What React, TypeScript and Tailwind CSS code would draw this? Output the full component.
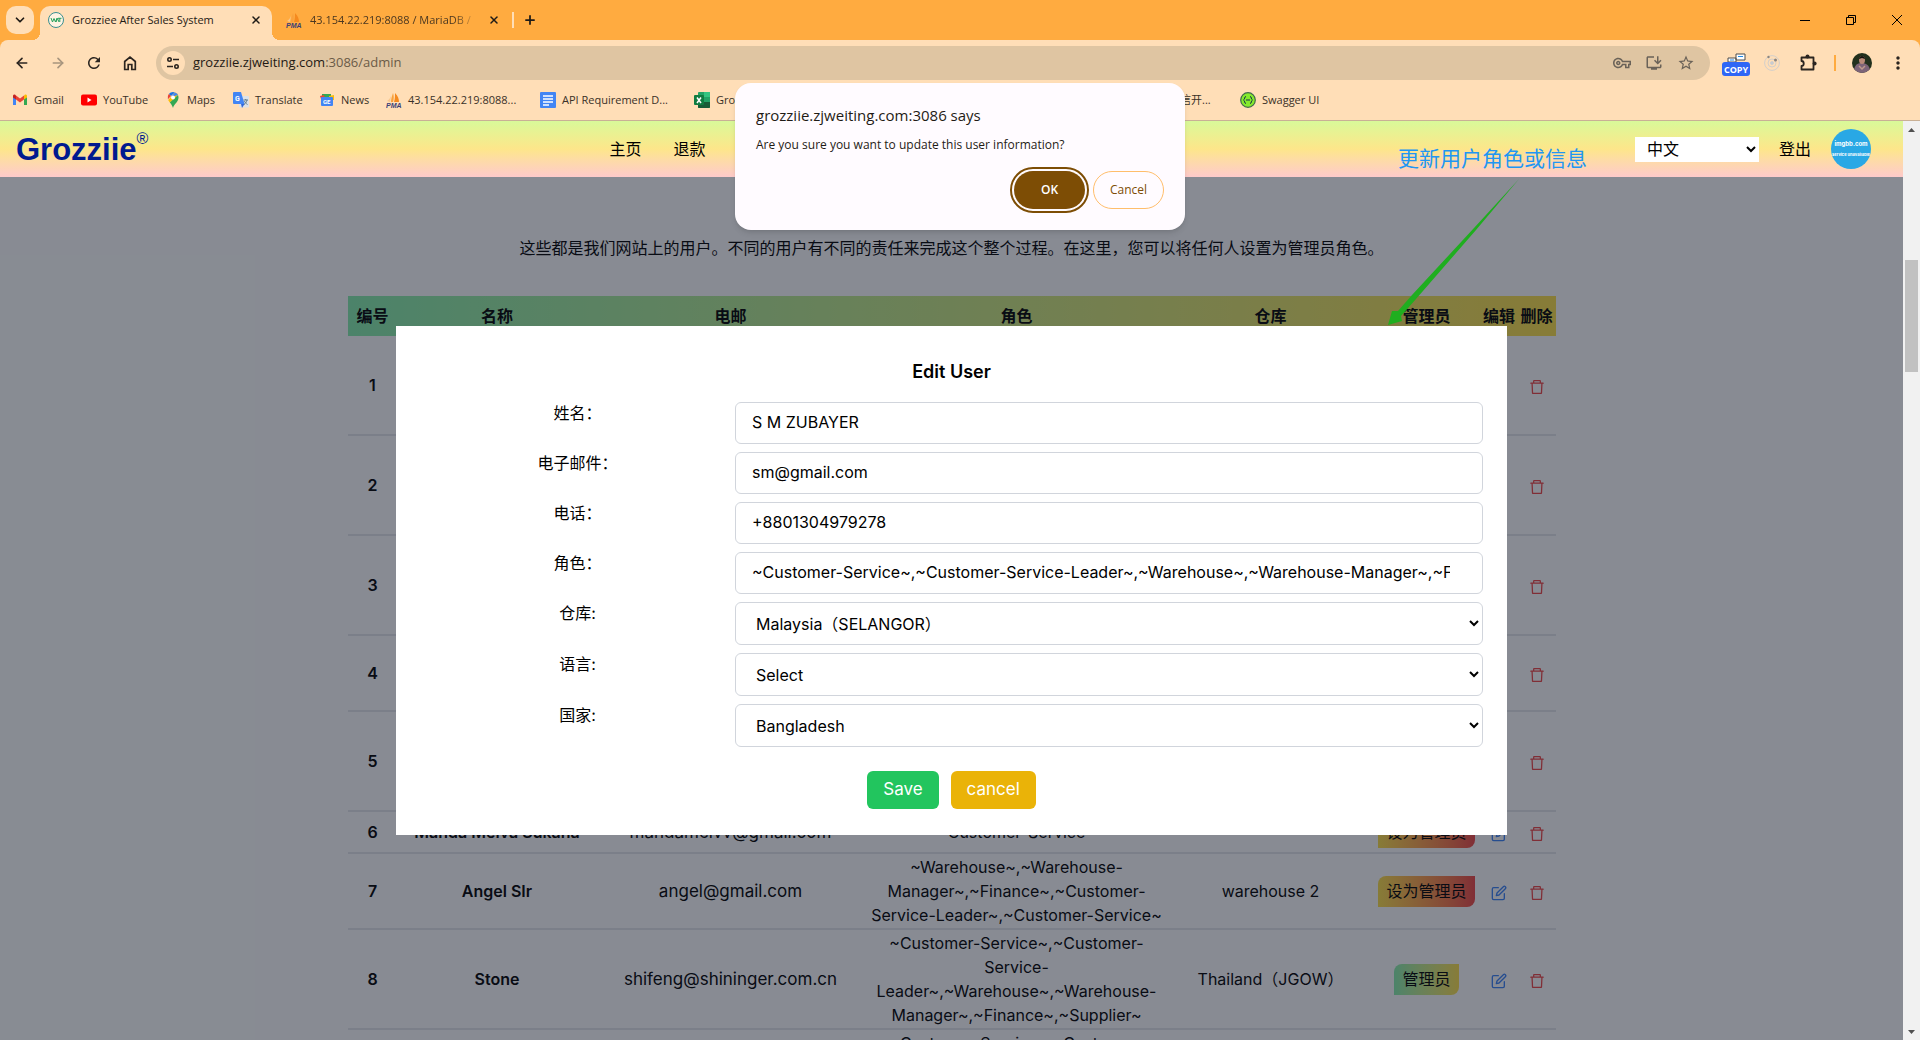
import React from "react";
import { MdOutlineVpnKey, MdInstallDesktop, MdStarBorder, MdMoreVert, MdRefresh } from "react-icons/md";
import { AiOutlineDelete } from "react-icons/ai";
import { FiEdit } from "react-icons/fi";
import { ArrowLeft, ArrowRight, ChevronDown, Plus, X } from "lucide-react";

type User = {
  id: number;
  name: string;
  email: string;
  roles: string;
  warehouse: string;
  isAdmin: boolean;
  height: string;
};

const FULL = "~Customer-Service~,~Customer-Service-Leader~,~Warehouse~,~Warehouse-Manager~,~Finance~,~Supplier~";

const users: User[] = [
  { id: 1, name: "", email: "", roles: "", warehouse: "", isAdmin: true, height: "h-[99px]" },
  { id: 2, name: "", email: "", roles: "", warehouse: "", isAdmin: true, height: "h-[100px]" },
  { id: 3, name: "", email: "", roles: "", warehouse: "", isAdmin: true, height: "h-[100px]" },
  { id: 4, name: "", email: "", roles: "", warehouse: "", isAdmin: true, height: "h-[76px]" },
  { id: 5, name: "", email: "", roles: "", warehouse: "", isAdmin: true, height: "h-[100px]" },
  { id: 6, name: "Manda Melva Sukana", email: "mandamelvv@gmail.com", roles: "Customer-Service", warehouse: "", isAdmin: false, height: "h-[42px]" },
  { id: 7, name: "Angel SIr", email: "angel@gmail.com", roles: "~Warehouse~,~Warehouse-Manager~,~Finance~,~Customer-Service-Leader~,~Customer-Service~", warehouse: "warehouse 2", isAdmin: false, height: "h-[76px]" },
  { id: 8, name: "Stone", email: "shifeng@shininger.com.cn", roles: FULL, warehouse: "Thailand（JGOW）", isAdmin: true, height: "h-[100px]" },
  { id: 9, name: "", email: "", roles: FULL, warehouse: "", isAdmin: true, height: "h-[100px]" },
];

function PmaIcon() {
  return (
    <svg viewBox="0 0 16 16" className="size-4 shrink-0">
      <path d="M5 10 C5 7 6 4 7 1 C8 4 8 7 7 10Z" fill="#f8a13c" />
      <path d="M8 10 C9 7 9 4 9 1 C12 4 13 7 13 10Z" fill="#f58a1f" />
      <path d="M1 9 C3 8 4 6 5 4 L4 10Z" fill="#f9c68a" />
      <text x="0" y="16" fontSize="7" fontWeight="bold" fontStyle="italic" fontFamily="Liberation Sans" fill="#3b3f77">PMA</text>
    </svg>
  );
}

function GmailIcon() {
  return (
    <svg viewBox="0 0 16 16" className="size-4 shrink-0">
      <path d="M1 4v9h3V7z" fill="#4285f4" />
      <path d="M15 4v9h-3V7z" fill="#34a853" />
      <path d="M4 3.500v4L8 10.500l4-3v-4L8 6.500z" fill="#ea4335" />
      <path d="M1 4c0-1.500 2-2 3-.5v4L1 5.500z" fill="#c5221f" />
      <path d="M15 4c0-1.500-2-2-3-.5v4l3-2z" fill="#fbbc04" />
    </svg>
  );
}

function YouTubeIcon() {
  return (
    <svg viewBox="0 0 16 16" className="size-4 shrink-0">
      <rect x="0" y="2.500" width="16" height="11" rx="2" fill="#f00" />
      <path d="M6.500 5.500v5l4-2.500z" fill="#fff" />
    </svg>
  );
}

function MapsIcon() {
  return (
    <svg viewBox="0 0 16 16" className="size-4 shrink-0">
      <path d="M8 0a5.500 5.500 0 0 0-4.200 2L6 4l4-3.600A5.500 5.500 0 0 0 8 0z" fill="#1a73e8" />
      <path d="M3.800 2a5.500 5.500 0 0 0-.9 5.200L6 4z" fill="#ea4335" />
      <path d="M10 .4 3.200 8c.4 1 1 1.800 1.600 2.600L13 3A5.500 5.500 0 0 0 10 .4z" fill="#fbbc04" />
      <path d="M13 3 4.800 10.600C6.500 12.500 7.300 14 8 16c1-4 5.500-6 5.500-10.500 0-1-.2-1.800-.5-2.500z" fill="#34a853" />
      <path d="M13 3a5.500 5.500 0 0 0-3-2.600L6 5z" fill="#4285f4" />
      <circle cx="8" cy="5.500" r="2" fill="#fff" />
    </svg>
  );
}

function TranslateIcon() {
  return (
    <svg viewBox="0 0 16 16" className="size-4 shrink-0">
      <rect x="6" y="4" width="10" height="11.500" rx="1" fill="#dde2e8" />
      <path d="M0 1a1 1 0 0 1 1-1h7l3.500 12H1a1 1 0 0 1-1-1z" fill="#4285f4" />
      <path d="M8 12h3.500L9 16z" fill="#3367d6" />
      <text x="2" y="8.500" fontSize="7" fontWeight="bold" fontFamily="Roboto" fill="#fff">G</text>
      <path d="M10.500 8h4.500M12.700 7v1M14 8c-.4 2-1.500 3.500-3 4.500M11.500 9c.5 1.500 1.500 2.500 3 3.500" stroke="#607d8b" fill="none" />
    </svg>
  );
}

function NewsIcon() {
  return (
    <svg viewBox="0 0 16 16" className="size-4 shrink-0">
      <rect x="3" y="2" width="9" height="5" fill="#34a853" />
      <path d="M1 4l4-1 1 4H2z" fill="#ea4335" />
      <path d="M10 4l5-1v5h-5z" fill="#fbbc04" />
      <rect x="2" y="5" width="12" height="9" rx="1" fill="#4285f4" />
      <text x="4" y="12" fontSize="6" fontWeight="bold" fontFamily="Roboto" fill="#fff">GE</text>
    </svg>
  );
}

function DocsIcon() {
  return (
    <svg viewBox="0 0 16 16" className="size-4 shrink-0">
      <rect width="16" height="16" rx="1" fill="#4285f4" />
      <path d="M3 4h10M3 7h10M3 10h10M3 13h6" stroke="#fff" strokeWidth="1.500" />
    </svg>
  );
}

function ExcelIcon() {
  return (
    <svg viewBox="0 0 16 16" className="size-4 shrink-0">
      <rect x="4" width="12" height="16" rx="1" fill="#21a366" />
      <path d="M10 0h5a1 1 0 0 1 1 1v4h-6z" fill="#33c481" />
      <path d="M4 10h12v5a1 1 0 0 1-1 1H5a1 1 0 0 1-1-1z" fill="#185c37" />
      <rect y="3" width="10" height="10" rx="1" fill="#107c41" />
      <path d="M3 5.500l4 5.500M7 5.500L3 11" stroke="#fff" strokeWidth="1.500" />
    </svg>
  );
}

function SwaggerIcon() {
  return (
    <svg viewBox="0 0 16 16" className="size-4 shrink-0">
      <circle cx="8" cy="8" r="7.300" fill="#85ea2d" stroke="#3f6b4a" strokeWidth="1.200" />
      <path d="M6 4.500c-2 0-.8 3-2.500 3.500C5.200 8.500 4 11.500 6 11.500M10 4.500c2 0 .8 3 2.500 3.500-1.700.5-.5 3.500-2.500 3.500M6 8h4" stroke="#173647" fill="none" />
    </svg>
  );
}

function SiteIcon() {
  return (
    <svg viewBox="0 0 16 16" className="size-4 shrink-0">
      <circle cx="8" cy="8" r="7.500" fill="#fff3e3" stroke="#3a8f8f" />
      <path d="M3 6l1.500 4L6 6.500 7.500 10 9 6M8 10l1.500-3.500L11 10M10 6.300h3.500M11.800 6.300V10" stroke="#22a05a" fill="none" />
    </svg>
  );
}

const bookmarks = [
  { label: "Gmail", icon: <GmailIcon />, width: "w-[69px]" },
  { label: "YouTube", icon: <YouTubeIcon />, width: "w-[84px]" },
  { label: "Maps", icon: <MapsIcon />, width: "w-[68px]" },
  { label: "Translate", icon: <TranslateIcon />, width: "w-[86px]" },
  { label: "News", icon: <NewsIcon />, width: "w-[67px]" },
  { label: "43.154.22.219:8088...", icon: <PmaIcon />, width: "w-[154px]" },
  { label: "API Requirement D...", icon: <DocsIcon />, width: "w-[154px]" },
  { label: "Grozziie", icon: <ExcelIcon />, width: "w-[486px]" },
  { label: "信开...", icon: null, width: "w-[60px]" },
  { label: "Swagger UI", icon: <SwaggerIcon />, width: "w-[100px]" },
];

function TabStrip() {
  return (
    <div className="flex h-10 items-end bg-[#ffab40]">
      <button aria-label="Search tabs" className="mb-1.5 ml-1.5 flex size-7 items-center justify-center rounded-[10px] bg-[#ffdeb7]">
        <ChevronDown className="size-3.5" strokeWidth={3} />
      </button>
      <div className="relative ml-1.5 flex h-[34px] w-[232px] items-center rounded-t-[10px] bg-[#ffdeb7] pb-1.5 pl-2 pr-2">
        <span className="absolute -left-2 bottom-0 size-2 bg-[radial-gradient(circle_at_0_0,#ffab40_8px,#ffdeb7_8px)]" />
        <span className="absolute -right-2 bottom-0 size-2 bg-[radial-gradient(circle_at_100%_0,#ffab40_8px,#ffdeb7_8px)]" />
        <SiteIcon />
        <span className="ml-2 grow whitespace-nowrap">Grozziee After Sales System</span>
        <button aria-label="Close tab" className="flex size-4 items-center justify-center">
          <X className="size-3" strokeWidth={3} />
        </button>
      </div>
      <div className="flex h-[34px] w-[240px] items-center pb-1.5 pl-3.5">
        <PmaIcon />
        <span className="ml-2 w-[168px] overflow-hidden whitespace-nowrap text-[#4a3720] [mask-image:linear-gradient(to_right,black_85%,transparent)]">
          43.154.22.219:8088 / MariaDB /
        </span>
        <button aria-label="Close tab" className="ml-2 flex size-4 items-center justify-center">
          <X className="size-3" strokeWidth={3} />
        </button>
      </div>
      <span className="mb-3 h-4 w-0.5 bg-[#ffdeb7]" />
      <button aria-label="New tab" className="mb-1.5 ml-0.5 flex size-7 items-center justify-center">
        <Plus className="size-3.5" strokeWidth={3} />
      </button>
      <div className="ml-auto flex h-10">
        <button aria-label="Minimize" className="flex w-[46px] items-center justify-center">
          <svg viewBox="0 0 10 10" className="size-2.5"><path d="M0 5.500h10" stroke="#000" /></svg>
        </button>
        <button aria-label="Restore" className="flex w-[46px] items-center justify-center">
          <svg viewBox="0 0 10 10" className="size-2.5"><path d="M.5 2.500h7v7h-7zM2.500 2.500v-2h7v7h-2" fill="none" stroke="#000" /></svg>
        </button>
        <button aria-label="Close window" className="flex w-[46px] items-center justify-center">
          <svg viewBox="0 0 10 10" className="size-2.5"><path d="M0 0l10 10M10 0L0 10" stroke="#000" /></svg>
        </button>
      </div>
    </div>
  );
}

function Toolbar() {
  return (
    <div className="flex h-[46px] items-center rounded-t-lg bg-[#ffdeb7] px-1 text-[#2b2520]">
      <button aria-label="Back" className="flex w-9 justify-center"><ArrowLeft className="size-4" strokeWidth={2.5} /></button>
      <button aria-label="Forward" className="flex w-9 justify-center text-[#a8957e]"><ArrowRight className="size-4" strokeWidth={2.5} /></button>
      <button aria-label="Reload" className="flex w-9 justify-center"><MdRefresh className="size-[18px]" /></button>
      <button aria-label="Home" className="flex w-9 justify-center">
        <svg viewBox="0 0 16 16" className="size-4"><path d="M2.700 14.500V6.500L8 2.200l5.300 4.300v8H9.800V9.500H6.200v5z" fill="none" stroke="currentColor" strokeWidth="1.700" /></svg>
      </button>
      <div className="mx-2 flex h-[34px] grow items-center rounded-full bg-[#dfc5a2] pl-[5px] pr-[15px]">
        <button aria-label="View site information" className="flex size-6 items-center justify-center rounded-full bg-[#ffdeb7]">
          <svg viewBox="0 0 14 14" className="size-3.5" fill="none" stroke="currentColor" strokeWidth="1.600">
            <circle cx="3.500" cy="3.500" r="1.700" /><path d="M7 3.500h6M1 10.500h6" /><circle cx="10.500" cy="10.500" r="1.700" />
          </svg>
        </button>
        <span className="ml-2 text-[13px] text-[#1f1a14]">grozziie.zjweiting.com<span className="text-[#6b5b47]">:3086/admin</span></span>
        <span className="ml-auto flex gap-3.5 text-[#6a6258]">
          <MdOutlineVpnKey className="size-[18px]" />
          <MdInstallDesktop className="size-[18px]" />
          <MdStarBorder className="size-[18px]" />
        </span>
      </div>
      <span className="flex w-9 justify-center pt-1">
        <svg viewBox="0 0 28 24" className="h-6 w-7">
          <path d="M14 1h9v6h-9zM6 5h8v4H6z" fill="#fff" stroke="#4d4d4d" />
          <path d="M16 3.500h5M8 7h4" stroke="#1e88e5" />
          <rect y="9" width="28" height="14" rx="3" fill="#2f66f6" />
          <text x="14" y="20" textAnchor="middle" fontSize="9" fontWeight="bold" fontFamily="Open Sans" fill="#fff">COPY</text>
        </svg>
      </span>
      <span className="flex w-9 justify-center">
        <svg viewBox="0 0 16 16" className="size-4" fill="none" stroke="#d3cfcb">
          <circle cx="8" cy="8" r="7.400" /><circle cx="8" cy="8" r="4" /><circle cx="8" cy="8" r="1.500" fill="#c4cbd4" />
          <circle cx="4.500" cy="2" r="1.200" fill="#8b8580" stroke="none" /><circle cx="11.500" cy="5" r="1.500" fill="#8b8580" stroke="none" />
        </svg>
      </span>
      <span className="flex w-9 justify-center">
        <svg viewBox="0 0 18 18" className="size-[18px]">
          <path d="M2.500 3.500h12v12h-12v-3.500c3 0 3-5 0-5z" fill="none" stroke="currentColor" strokeWidth="1.800" strokeLinejoin="round" />
          <circle cx="8.500" cy="2.600" r="2" fill="currentColor" />
          <circle cx="15.600" cy="9.500" r="2" fill="currentColor" />
        </svg>
      </span>
      <span className="flex w-[18px] justify-center"><span className="h-4 w-0.5 bg-[#ffab40]" /></span>
      <span className="flex w-9 justify-center">
        <svg viewBox="0 0 20 20" className="size-5 overflow-hidden rounded-full">
          <rect width="20" height="20" fill="#22301d" />
          <path d="M2 17c1-6 4-7 8-7s7 2 8 7l-4 3H6z" fill="#7d6478" />
          <ellipse cx="10" cy="7" rx="3" ry="4" fill="#b98a78" />
          <path d="M7 6c0-4 6-4 6 0l-3-1z" fill="#15120f" />
          <path d="M7 13l3 3 3-3" stroke="#c09a8c" strokeWidth="1.500" fill="none" />
        </svg>
      </span>
      <button aria-label="Menu" className="flex w-9 justify-center"><MdMoreVert className="size-5" /></button>
    </div>
  );
}

function Bookmarks() {
  return (
    <nav aria-label="Bookmarks" className="flex h-[35px] items-start border-b border-[#c9b095] bg-[#ffdeb7] pl-3 pt-1.5 text-[#3a3128]">
      {bookmarks.map((b) => (
        <a key={b.label} href="#" className={"flex h-4 shrink-0 items-center gap-1.5 whitespace-nowrap " + b.width}>
          {b.icon}
          {b.label}
        </a>
      ))}
    </nav>
  );
}

function Header() {
  return (
    <header className="relative z-20 flex h-14 shrink-0 items-center bg-linear-to-b from-lime-200 via-[#fde68a] to-[#fecaca] pl-4 pr-8">
      <a href="#" className="flex w-[32%] items-center font-['Liberation_Sans',sans-serif] text-[31px] leading-none font-bold text-[#001a8f]">
        Grozziie<sup className="-top-2.5 text-base font-normal">®</sup>
      </a>
      <nav className="flex gap-8">
        <a href="#">主页</a>
        <a href="#">退款</a>
      </nav>
      <div className="ml-auto flex items-center gap-5">
        <p className="mr-7 pt-5 text-[21px] leading-6 text-[#2196f3]">更新用户角色或信息</p>
        <select aria-label="Language" className="h-[25px] w-[124px] bg-white pl-2">
          <option>中文</option>
        </select>
        <a href="#">登出</a>
        <span className="flex size-10 flex-col items-center justify-center gap-1 rounded-full bg-[#29a8e5] text-center font-bold text-white">
          <span className="text-[6px] leading-[8px]">imgbb.com</span>
          <span className="text-[4px] leading-[6px]">service unavailable</span>
        </span>
      </div>
    </header>
  );
}

function UserTable() {
  return (
    <table className="mx-auto w-[1208px] table-fixed border-collapse text-center">
      <colgroup>
        <col className="w-[50px]" />
        <col className="w-[199px]" />
        <col className="w-[268px]" />
        <col className="w-[304px]" />
        <col className="w-[204px]" />
        <col className="w-[108px]" />
        <col className="w-[37px]" />
        <col className="w-[38px]" />
      </colgroup>
      <thead>
        <tr className="h-10 bg-linear-to-r from-[#86efac] to-[#fde047] whitespace-nowrap">
          {["编号", "名称", "电邮", "角色", "仓库", "管理员", "编辑", "删除"].map((h) => (
            <th key={h} className="p-0 font-semibold">{h}</th>
          ))}
        </tr>
      </thead>
      <tbody>
        {users.map((u) => (
          <tr key={u.id} className={"border-b-2 border-gray-200 " + u.height}>
            <td className="p-0 font-semibold">{u.id}</td>
            <td className="p-0 font-semibold">{u.name}</td>
            <td className="p-0 text-[17px] leading-6">{u.email}</td>
            <td className="p-0">{u.roles}</td>
            <td className="p-0">{u.warehouse}</td>
            <td className="p-0">
              <button
                className={
                  u.isAdmin
                    ? "h-[31px] rounded-tl-lg rounded-br-lg bg-linear-to-r from-[#86efac] to-[#fde047] px-2 align-middle"
                    : "h-[31px] rounded-tl-lg rounded-br-lg bg-linear-to-r from-[#fde047] to-[#ef4444] px-2 align-middle"
                }
              >
                {u.isAdmin ? "管理员" : "设为管理员"}
              </button>
            </td>
            <td className="p-0">
              <button aria-label="编辑" className="align-middle text-[#3b82f6]"><FiEdit className="size-4" /></button>
            </td>
            <td className="p-0">
              <button aria-label="删除" className="align-middle text-[#ef4444]"><AiOutlineDelete className="size-[18px]" /></button>
            </td>
          </tr>
        ))}
      </tbody>
    </table>
  );
}

const textFields = [
  { id: "name", label: "姓名：", value: "S M ZUBAYER" },
  { id: "email", label: "电子邮件：", value: "sm@gmail.com" },
  { id: "phone", label: "电话：", value: "+8801304979278" },
  { id: "role", label: "角色：", value: FULL },
];

const selectFields = [
  { id: "warehouse", label: "仓库:", value: "Malaysia（SELANGOR）" },
  { id: "language", label: "语言:", value: "Select" },
  { id: "country", label: "国家:", value: "Bangladesh" },
];

function EditUserModal() {
  return (
    <div className="absolute inset-0 z-10 flex items-center justify-center bg-[#111827]/50">
      <form className="flex w-[1111px] flex-col bg-white px-6 pt-8 pb-[26px]">
        <h2 className="mb-4 text-center text-lg leading-7 font-semibold">Edit User</h2>
        <div className="flex flex-col gap-2">
          {textFields.map((f) => (
            <div key={f.id} className="flex">
              <label htmlFor={f.id} className="w-[315px] text-center leading-[22px]">{f.label}</label>
              <input id={f.id} defaultValue={f.value} className="h-[42px] min-w-0 grow rounded-md border border-gray-300 pr-8 pb-0.5 pl-4" />
            </div>
          ))}
          {selectFields.map((f) => (
            <div key={f.id} className="flex">
              <label htmlFor={f.id} className="w-[315px] text-center leading-[22px]">{f.label}</label>
              <select id={f.id} className="h-[43px] min-w-0 grow rounded-md border border-gray-300 bg-white pl-4">
                <option>{f.value}</option>
              </select>
            </div>
          ))}
        </div>
        <div className="mt-6 flex justify-center gap-3 text-[17px] text-white">
          <button type="button" className="h-[38px] rounded-md bg-[#22c55e] px-4">Save</button>
          <button type="button" className="h-[38px] rounded-md bg-[#eab308] px-4">cancel</button>
        </div>
      </form>
    </div>
  );
}

function ConfirmDialog() {
  return (
    <div role="alertdialog" aria-label="Confirm" className="absolute top-[83px] left-1/2 z-40 flex h-[147px] w-[450px] -translate-x-1/2 flex-col rounded-2xl bg-[#fffbff] px-[21px] pt-5 font-['Open_Sans','Noto_Sans',sans-serif] text-[#1f1b16] shadow-md">
      <h1 className="text-[15px] leading-6">grozziie.zjweiting.com:3086 says</h1>
      <p className="mt-2 text-xs leading-5">Are you sure you want to update this user information?</p>
      <div className="mt-4 flex justify-end gap-2 text-xs">
        <button className="h-[38px] w-[71px] rounded-full bg-[#7d4d05] font-semibold text-white outline-2 outline-offset-2 outline-[#7d4d05]">OK</button>
        <button className="h-[38px] w-[71px] rounded-full border border-[#ffbe6b] font-medium text-[#7d4d05]">Cancel</button>
      </div>
    </div>
  );
}

function Scrollbar() {
  return (
    <div className="flex w-[17px] shrink-0 flex-col items-center bg-[#f1f1f1]">
      <svg viewBox="0 0 17 17" className="size-[17px]"><path d="M5 11h7L8.500 7z" fill="#505050" /></svg>
      <div className="mt-[122px] h-28 w-[13px] bg-[#c1c1c1]" />
      <svg viewBox="0 0 17 17" className="mt-auto size-[17px]"><path d="M5 7h7l-3.500 4z" fill="#505050" /></svg>
    </div>
  );
}

export default function App() {
  return (
    <div className="relative flex h-screen flex-col overflow-hidden bg-[#ffab40] font-[Inter,'Noto_Sans_CJK_SC',sans-serif] text-black">
      <div className="shrink-0 font-['Open_Sans','Noto_Sans_CJK_SC',sans-serif] text-[11px] text-[#1f1b16]">
        <TabStrip />
        <Toolbar />
        <Bookmarks />
      </div>
      <div className="flex min-h-0 grow">
        <div className="relative flex min-w-0 grow flex-col overflow-hidden bg-white">
          <Header />
          <main className="min-h-0 grow overflow-hidden">
            <p className="mt-[59px] mb-9 text-center leading-6">
              这些都是我们网站上的用户。不同的用户有不同的责任来完成这个整个过程。在这里，您可以将任何人设置为管理员角色。
            </p>
            <UserTable />
          </main>
          <EditUserModal />
        </div>
        <Scrollbar />
      </div>
      <svg viewBox="0 0 132 150" className="absolute top-[178px] right-[400px] z-30 h-[150px] w-[132px]">
        <path d="M131 1L86 50L24 117L10 133L4 133L0 147L14 143L13 138L28 121L88 52Z" fill="#1fae1f" />
      </svg>
      <ConfirmDialog />
    </div>
  );
}
